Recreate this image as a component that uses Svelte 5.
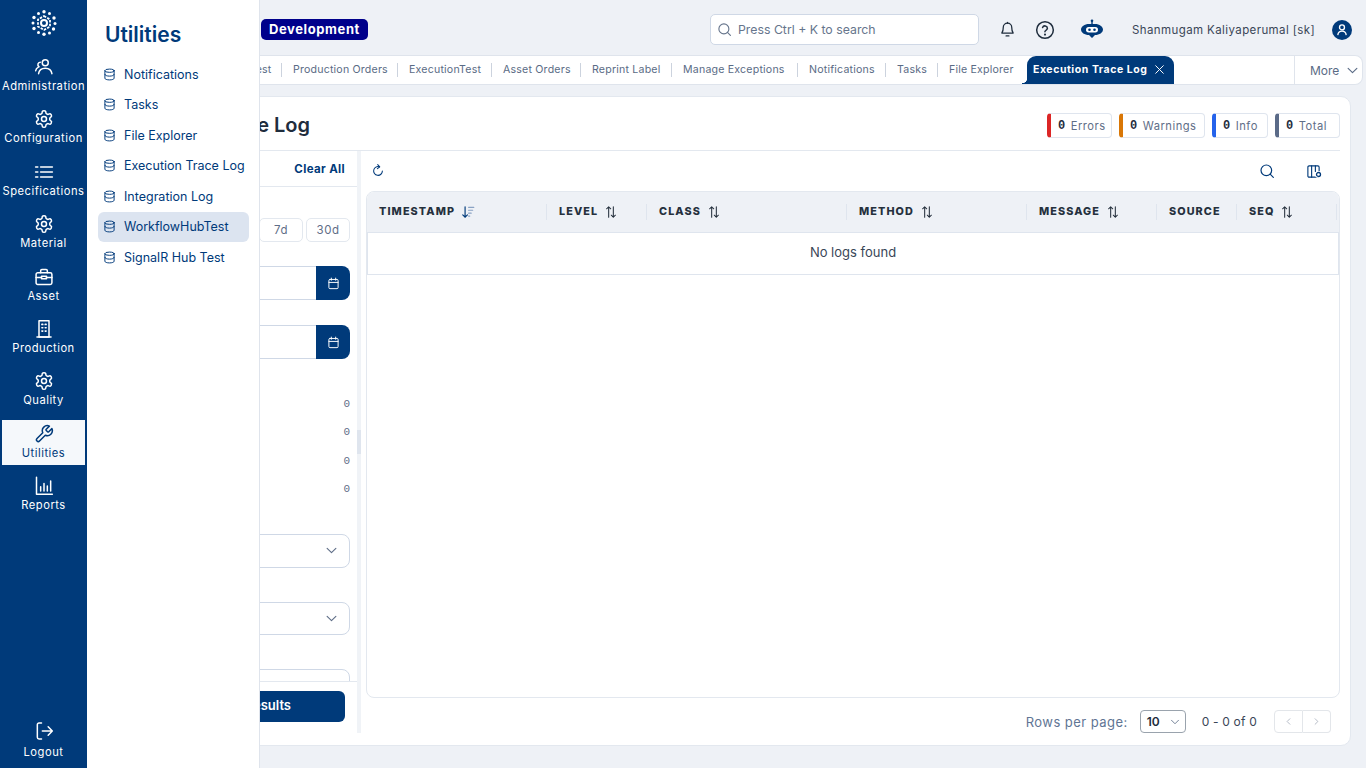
<script>
  const icons = {
    users: '<circle cx="13.5" cy="7" r="3.6"/><path d="M5.500 20c.6-4.500 3.600-6.600 8-6.600s7.400 2.100 8 6.600"/><path d="M7.500 6.200a3 3 0 0 0-1.500 5.500"/><path d="M2 16.500c.3-2 1.400-3.400 3-4.100"/>',
    gear: '<path d="M12.220 2h-.44a2 2 0 0 0-2 2v.18a2 2 0 0 1-1 1.730l-.43.25a2 2 0 0 1-2 0l-.15-.08a2 2 0 0 0-2.730.730l-.22.380a2 2 0 0 0 .730 2.730l.15.100a2 2 0 0 1 1 1.720v.510a2 2 0 0 1-1 1.740l-.15.090a2 2 0 0 0-.730 2.730l.22.380a2 2 0 0 0 2.730.730l.15-.08a2 2 0 0 1 2 0l.43.250a2 2 0 0 1 1 1.730V20a2 2 0 0 0 2 2h.44a2 2 0 0 0 2-2v-.18a2 2 0 0 1 1-1.730l.43-.25a2 2 0 0 1 2 0l.15.080a2 2 0 0 0 2.730-.730l.22-.39a2 2 0 0 0-.730-2.730l-.15-.08a2 2 0 0 1-1-1.740v-.5a2 2 0 0 1 1-1.740l.15-.09a2 2 0 0 0 .730-2.730l-.22-.38a2 2 0 0 0-2.730-.730l-.15.080a2 2 0 0 1-2 0l-.43-.25a2 2 0 0 1-1-1.730V4a2 2 0 0 0-2-2z"/><circle cx="12" cy="12" r="3"/>',
    list: '<path d="M8 6h14M8 12h14M8 18h14" stroke-width="2"/><path d="M2 6h2.500M2 12h2.500M2 18h2.500" stroke-width="2"/>',
    case: '<rect x="2.500" y="7" width="19" height="14" rx="2"/><path d="M8 7V4.500A1.500 1.500 0 0 1 9.500 3h5A1.500 1.500 0 0 1 16 4.500V7"/><path d="M2.500 12.500h6.500M15 12.500h6.500"/><rect x="9" y="11" width="6" height="3"/>',
    building: '<rect x="6" y="2" width="12" height="19.500"/><path d="M3.500 21.500h17"/><path d="M9.500 6.500h1M13.500 6.500h1M9.500 10.500h1M13.500 10.500h1M9.500 14.500h1M13.500 14.500h1" stroke-width="2"/>',
    wrench: '<path d="M14.700 6.300a1 1 0 0 0 0 1.400l1.600 1.600a1 1 0 0 0 1.400 0l3.770-3.770a6 6 0 0 1-7.940 7.940l-6.910 6.910a2.120 2.120 0 0 1-3-3l6.910-6.910a6 6 0 0 1 7.940-7.940l-3.760 3.760z"/>',
    chart: '<path d="M3 1.500v20.500h19"/><path d="M8 13v5M12 9v9M16 12v6M20 6v12"/>',
    logout: '<path d="M9 2.500H6a2 2 0 0 0-2 2v15a2 2 0 0 0 2 2h3"/><path d="M10 12h12M17 7l5 5-5 5"/>',
    db: '<ellipse cx="12" cy="5" rx="8.500" ry="3"/><path d="M3.500 5v14c0 1.700 3.800 3 8.500 3s8.500-1.300 8.500-3V5"/><path d="M3.500 12c0 1.700 3.800 3 8.500 3s8.500-1.300 8.500-3"/>',
    calendar: '<rect x="3.500" y="4.500" width="17" height="17" rx="2"/><path d="M3.500 10h17M8 2v4M16 2v4"/>',
    search: '<circle cx="11" cy="11" r="8"/><path d="M21.500 21.500l-4.800-4.800"/>',
    bell: '<path d="M6 9a6 6 0 0 1 12 0c0 6 2 7.500 2 8H4c0-.5 2-2 2-8z"/><path d="M10 21h4M12 3V2"/>',
    help: '<circle cx="12" cy="12" r="10"/><path d="M9.100 9a3 3 0 0 1 5.800 1c0 2-3 2.500-3 4.200"/><path d="M12 17.500h.01" stroke-width="2.500"/>',
    user: '<circle cx="12" cy="8.500" r="3.300"/><path d="M6.500 18c.6-3 2.700-4.500 5.500-4.500s4.900 1.500 5.500 4.500"/>',
    refresh: '<path d="M19.500 12a7.500 7.500 0 1 1-5-7.100"/><path d="M11.500 1l3.500 3.900L11 8"/>',
    columns: '<rect x="3" y="3" width="18" height="18" rx="2"/><path d="M9 3v18M15 3v9"/>',
    chevron: '<path d="M5 8.500l7 7 7-7"/>',
    close: '<path d="M5 5l14 14M19 5L5 19"/>',
    left: '<path d="M15 6l-6 6 6 6"/>',
    right: '<path d="M9 6l6 6-6 6"/>',
    sort: '<path d="M8 21V3M4.500 6.500L8 3l3.500 3.500"/><path d="M16 3v18M12.500 17.500L16 21l3.500-3.500"/>'
  };

  const rail = [
    { label: 'Administration', icon: 'users' },
    { label: 'Configuration', icon: 'gear' },
    { label: 'Specifications', icon: 'list' },
    { label: 'Material', icon: 'gear' },
    { label: 'Asset', icon: 'case' },
    { label: 'Production', icon: 'building' },
    { label: 'Quality', icon: 'gear' },
    { label: 'Utilities', icon: 'wrench', active: true },
    { label: 'Reports', icon: 'chart' }
  ];

  const utilities = [
    'Notifications', 'Tasks', 'File Explorer', 'Execution Trace Log',
    'Integration Log', 'WorkflowHubTest', 'SignalR Hub Test'
  ];

  const tabs = [
    { label: 'SignalR Hub Test', width: 110 },
    { label: 'Production Orders', width: 116 },
    { label: 'ExecutionTest', width: 94 },
    { label: 'Asset Orders', width: 89 },
    { label: 'Reprint Label', width: 91 },
    { label: 'Manage Exceptions', width: 126 },
    { label: 'Notifications', width: 88 },
    { label: 'Tasks', width: 52 },
    { label: 'File Explorer', width: 89 }
  ];

  const counters = [
    { label: 'Errors', color: '#dc2626', width: 65 },
    { label: 'Warnings', color: '#d97706', width: 86 },
    { label: 'Info', color: '#2563eb', width: 56 },
    { label: 'Total', color: '#5b6b88', width: 65 }
  ];

  const columns = [
    { label: 'TIMESTAMP', width: 180, sort: 'active' },
    { label: 'LEVEL', width: 100, sort: 'plain' },
    { label: 'CLASS', width: 200, sort: 'plain' },
    { label: 'METHOD', width: 180, sort: 'plain' },
    { label: 'MESSAGE', width: 130, sort: 'plain' },
    { label: 'SOURCE', width: 80 },
    { label: 'SEQ', width: 100, sort: 'plain' }
  ];

  const levelRows = [0, 0, 0, 0];
</script>

{#snippet icon(name, size, cls = '')}
  <svg class={cls} width={size} height={size} viewBox="0 0 24 24" fill="none" stroke="currentColor" stroke-width="1.8" stroke-linecap="round" stroke-linejoin="round">{@html icons[name]}</svg>
{/snippet}

<div class="shell">
  <nav class="rail">
    <div class="logo">
      <svg width="26" height="26" viewBox="0 0 26 26" fill="none" stroke="#fff">
        <circle cx="13" cy="13" r="3" stroke-width="2" />
        <path d="M13 6l6 3.500v7L13 20l-6-3.500v-7z" stroke-dasharray="2.500 1.200" stroke-width="1.800" />
        <g fill="#fff" stroke="none">
          <circle cx="13" cy="1.800" r="1.700" /><circle cx="18.500" cy="3.500" r="1.500" /><circle cx="23" cy="8" r="1.700" />
          <circle cx="24" cy="13.500" r="1.500" /><circle cx="22.500" cy="19" r="1.700" /><circle cx="18.500" cy="23" r="1.500" />
          <circle cx="13" cy="24.200" r="1.700" /><circle cx="7.500" cy="22.500" r="1.500" /><circle cx="3" cy="18.500" r="1.700" />
          <circle cx="2" cy="13" r="1.500" /><circle cx="3" cy="7.500" r="1.700" /><circle cx="7.500" cy="3.500" r="1.500" />
        </g>
      </svg>
    </div>
    <div class="rail-items">
      {#each rail as item}
        <div class="rail-item" class:active={item.active}>
          {@render icon(item.icon, 20)}
          <span>{item.label}</span>
        </div>
      {/each}
    </div>
    <div class="rail-item logout">
      {@render icon('logout', 20)}
      <span>Logout</span>
    </div>
  </nav>

  <aside class="flyout">
    <h2>Utilities</h2>
    <ul>
      {#each utilities as name}
        <li class:selected={name === 'WorkflowHubTest'}>
          {@render icon('db', 13)}
          <span>{name}</span>
        </li>
      {/each}
    </ul>
  </aside>

  <main class="main">
    <header class="topbar">
      <span class="env">Development</span>
      <div class="search">
        {@render icon('search', 15)}
        <span>Press Ctrl + K to search</span>
      </div>
      <div class="top-icons">
        <span class="bell">{@render icon('bell', 17)}</span>
        <span class="help">{@render icon('help', 20)}</span>
        <svg class="robot" width="22" height="22" viewBox="0 0 22 22">
          <path d="M11 1v4" stroke="#003a7a" stroke-width="1.400" />
          <circle cx="11" cy="1.800" r="1.300" fill="#003a7a" />
          <path d="M8 5h6c4.500 0 8 2.500 8 5.500S18.500 16 14 16l-3 3-3-3c-4.500 0-8-2.500-8-5.500S3.500 5 8 5z" fill="#003a7a" />
          <rect x="5" y="8" width="12" height="5.500" rx="2.700" fill="#fff" />
          <circle cx="8.500" cy="10.700" r="1.300" fill="#003a7a" /><circle cx="13.500" cy="10.700" r="1.300" fill="#003a7a" />
        </svg>
      </div>
      <span class="username">Shanmugam Kaliyaperumal [sk]</span>
      <span class="avatar">{@render icon('user', 18)}</span>
    </header>

    <div class="tabbar">
      {#each tabs as tab}
        <div class="tab" style="width: {tab.width}px"><span>{tab.label}</span></div>
      {/each}
      <div class="tab-active">
        <span>Execution Trace Log</span>
        {@render icon('close', 13)}
      </div>
      <div class="more">
        <span>More</span>
        {@render icon('chevron', 15)}
      </div>
    </div>

    <section class="card">
      <div class="card-head">
        <h1>Execution Trace Log</h1>
        <div class="counters">
          {#each counters as c}
            <div class="counter" style="border-left-color: {c.color}; width: {c.width}px">
              <b>0</b><span>{c.label}</span>
            </div>
          {/each}
        </div>
      </div>

      <div class="card-body">
        <div class="filters">
          <div class="filters-head"><button class="clear">Clear All</button></div>
          <div class="filters-scroll">
            <div class="quick">
              <button>7d</button>
              <button>30d</button>
            </div>
            <div class="date first">
              <div class="date-input"></div>
              <button class="date-btn">{@render icon('calendar', 13)}</button>
            </div>
            <div class="date second">
              <div class="date-input"></div>
              <button class="date-btn">{@render icon('calendar', 13)}</button>
            </div>
            <div class="levels">
              {#each levelRows as n}
                <div class="level">{n}</div>
              {/each}
            </div>
            <div class="select first-select">{@render icon('chevron', 15)}</div>
            <div class="select second-select">{@render icon('chevron', 15)}</div>
            <div class="select third-select"></div>
          </div>
          <div class="filters-foot">
            <button class="show">Show Results</button>
          </div>
        </div>

        <div class="splitter"><i></i></div>

        <div class="results">
          <div class="toolbar">
            <span class="tool refresh">{@render icon('refresh', 14)}</span>
            <span class="tool find">{@render icon('search', 16)}</span>
            <span class="tool cols">
              {@render icon('columns', 15)}
              <svg class="cog" width="7" height="7" viewBox="0 0 7 7"><circle cx="3.500" cy="3.500" r="3.500" fill="#fff" /><circle cx="3.500" cy="3.500" r="2" fill="none" stroke="#003a7a" stroke-width="1.300" /></svg>
            </span>
          </div>

          <div class="table">
            <div class="thead">
              {#each columns as col}
                <div class="th" style="width: {col.width}px">
                  <span>{col.label}</span>
                  {#if col.sort === 'plain'}
                    {@render icon('sort', 14, 'sort')}
                  {:else if col.sort === 'active'}
                    <svg class="sort" width="14" height="14" viewBox="0 0 24 24" fill="none" stroke-width="2" stroke-linecap="round">
                      <path d="M7 3v18M3 17l4 4 4-4" stroke="#003a7a" />
                      <path d="M13 4h9M13 9h7M13 14h4.500M13 19h2" stroke="#8aa3c4" />
                    </svg>
                  {/if}
                </div>
              {/each}
            </div>
            <div class="empty">No logs found</div>
          </div>

          <div class="pager">
            <span class="rows-label">Rows per page:</span>
            <div class="rows-select"><b>10</b>{@render icon('chevron', 12)}</div>
            <span class="range">0 - 0 of 0</span>
            <div class="pager-btns">
              <button>{@render icon('left', 11)}</button>
              <button>{@render icon('right', 11)}</button>
            </div>
          </div>
        </div>
      </div>
    </section>
  </main>
</div>

<style>
  :global(body) {
    background: #eef1f6;
  }

  .shell {
    position: relative;
    display: flex;
    width: 1366px;
    height: 768px;
    overflow: hidden;
    font-family: Inter, "Noto Sans", sans-serif;
    color: #1f2d3d;
  }

  button {
    font-family: inherit;
    background: none;
    border: none;
    padding: 0;
  }

  svg {
    display: block;
    flex: none;
  }

  /* left rail */
  .rail {
    width: 87px;
    flex: none;
    background: #003a7a;
    color: #fff;
    display: flex;
    flex-direction: column;
    align-items: center;
  }

  .logo {
    height: 53px;
    padding-top: 10px;
    box-sizing: border-box;
  }

  .rail-items {
    display: flex;
    flex-direction: column;
    gap: 7.4px;
  }

  .rail-item {
    width: 83px;
    height: 45px;
    box-sizing: border-box;
    padding-top: 4px;
    display: flex;
    flex-direction: column;
    align-items: center;
    gap: 1px;
  }

  .rail-item span {
    font-size: 11.2px;
    line-height: 17px;
    letter-spacing: 0.5px;
    white-space: nowrap;
  }

  .rail-item.active {
    background: #f5f8fb;
    color: #003a7a;
  }

  .logout {
    margin-top: auto;
    margin-bottom: 6px;
    gap: 3px;
  }

  /* utilities flyout */
  .flyout {
    position: absolute;
    left: 87px;
    top: 0;
    bottom: 0;
    z-index: 5;
    width: 173px;
    box-sizing: border-box;
    background: #fff;
    border-right: 1px solid #dfe4ec;
    padding: 21px 10px 0 11px;
    color: #003a7a;
  }

  .flyout h2 {
    margin: 0 0 11px 7px;
    font-size: 21px;
    line-height: 27px;
    font-weight: 600;
  }

  .flyout ul {
    list-style: none;
    margin: 0;
    padding: 0;
    display: flex;
    flex-direction: column;
    gap: 0.6px;
  }

  .flyout li {
    height: 30px;
    display: flex;
    align-items: center;
    gap: 8px;
    padding-left: 5px;
    border-radius: 6px;
    font-size: 12.5px;
    white-space: nowrap;
  }

  .flyout li.selected {
    background: #dce4f0;
  }

  /* main column */
  .main {
    flex: 1;
    min-width: 0;
    padding-left: 10px;
    display: flex;
    flex-direction: column;
  }

  .topbar {
    height: 55px;
    flex: none;
    display: flex;
    align-items: center;
    padding: 4px 0 0 164px;
    box-sizing: border-box;
  }

  .env {
    width: 107px;
    height: 21px;
    line-height: 21px;
    text-align: center;
    background: #00008b;
    color: #fff;
    border-radius: 5px;
    font-size: 13px;
    font-weight: 700;
    letter-spacing: 0.6px;
  }

  .search {
    margin-left: 342px;
    width: 269px;
    height: 31px;
    box-sizing: border-box;
    background: #fff;
    border: 1px solid #cfd8e6;
    border-radius: 5px;
    display: flex;
    align-items: center;
    gap: 6px;
    padding-left: 6px;
    font-size: 12.3px;
    color: #66758c;
  }

  .top-icons {
    display: flex;
    align-items: center;
    margin-left: 20px;
    color: #1f2d3d;
  }

  .help {
    margin-left: 19px;
  }

  .robot {
    margin-left: 26px;
  }

  .username {
    margin-left: 29px;
    width: 185px;
    font-size: 11.5px;
    letter-spacing: 0.4px;
    color: #3a4657;
    white-space: nowrap;
  }

  .avatar {
    margin-left: 15px;
    width: 20px;
    height: 20px;
    border-radius: 50%;
    background: #003a7a;
    color: #fff;
    display: flex;
    align-items: center;
    justify-content: center;
  }

  /* tab strip */
  .tabbar {
    height: 30px;
    flex: none;
    width: 1266px;
    box-sizing: border-box;
    display: flex;
    align-items: center;
    padding-left: 75px;
    background: #fff;
    border: 1px solid #dfe4ec;
    border-left: none;
    border-radius: 0 8px 8px 0;
  }

  .tab {
    height: 14px;
    box-sizing: border-box;
    padding-left: 11px;
    border-right: 1px solid #ccd3de;
    display: flex;
    align-items: center;
    font-size: 10.6px;
    letter-spacing: 0.2px;
    color: #5a6b85;
    white-space: nowrap;
    flex: none;
  }

  .tab span {
    margin-top: -1px;
  }

  .tab:nth-child(9) {
    border-right: none;
  }

  .tab-active {
    position: relative;
    width: 147px;
    height: 28px;
    box-sizing: border-box;
    flex: none;
    background: #003a7a;
    color: #fff;
    border-radius: 9px 9px 0 0;
    display: flex;
    align-items: center;
    justify-content: space-between;
    padding: 0 8px 1px 6px;
    font-size: 10.5px;
    font-weight: 700;
    letter-spacing: 0.55px;
    white-space: nowrap;
  }

  .tab-active::before {
    content: "";
    position: absolute;
    left: -5px;
    bottom: 0;
    width: 5px;
    height: 6px;
    background: radial-gradient(circle at 0 0, transparent 5px, #003a7a 5.500px);
  }

  .more {
    margin-left: auto;
    width: 68px;
    height: 28px;
    box-sizing: border-box;
    border-left: 1px solid #dfe4ec;
    display: flex;
    align-items: center;
    padding-left: 15px;
    gap: 6px;
    font-size: 12px;
    color: #5a6b85;
  }

  /* card */
  .card {
    margin-top: 11px;
    width: 1254px;
    height: 650px;
    box-sizing: border-box;
    background: #fff;
    border: 1px solid #e3e8ef;
    border-radius: 10px;
    display: flex;
    flex-direction: column;
    padding-right: 10px;
  }

  .card-head {
    height: 54px;
    flex: none;
    box-sizing: border-box;
    border-bottom: 1px solid #e3e8ef;
    display: flex;
    align-items: center;
    justify-content: space-between;
  }

  .card-head h1 {
    margin: 2px 0 0;
    width: 212px;
    text-align: right;
    font-size: 20px;
    font-weight: 600;
    white-space: nowrap;
    color: #1f2d3d;
  }

  .counters {
    display: flex;
    gap: 7px;
    margin-top: 4px;
  }

  .counter {
    height: 25px;
    box-sizing: border-box;
    display: flex;
    align-items: center;
    gap: 5px;
    padding-left: 7px;
    border: 1px solid #dfe5ee;
    border-left: 4px solid;
    border-radius: 4px;
    font-size: 11.2px;
    letter-spacing: 0.5px;
    color: #5f6e87;
  }

  .counter b {
    font-family: "Liberation Mono", monospace;
    font-size: 12px;
    color: #1f2d3d;
  }

  .card-body {
    flex: 1;
    min-height: 0;
    display: flex;
  }

  /* filter panel */
  .filters {
    width: 259px;
    flex: none;
    height: 582px;
    display: flex;
    flex-direction: column;
  }

  .filters-head {
    height: 36px;
    flex: none;
    box-sizing: border-box;
    border-bottom: 1px solid #e3e8ef;
    display: flex;
    align-items: center;
    justify-content: flex-end;
    padding-right: 12px;
  }

  .clear {
    font-size: 11.5px;
    font-weight: 700;
    letter-spacing: 0.35px;
    color: #003a7a;
  }

  .filters-scroll {
    flex: 1;
    min-height: 0;
    overflow: hidden;
    padding: 31px 7px 0 12px;
  }

  .quick {
    display: flex;
    justify-content: flex-end;
    gap: 3px;
  }

  .quick button {
    width: 44px;
    height: 24px;
    box-sizing: border-box;
    border: 1px solid #e3e8ef;
    border-radius: 5px;
    font-size: 11.5px;
    letter-spacing: 0.5px;
    color: #5f6e87;
  }

  .date {
    display: flex;
    height: 34px;
  }

  .date.first {
    margin-top: 24px;
  }

  .date.second {
    margin-top: 25px;
  }

  .date-input {
    flex: 1;
    border: 1px solid #cfd8e6;
    border-right: none;
    border-radius: 8px 0 0 8px;
  }

  .date-btn {
    width: 34px;
    background: #003a7a;
    color: #fff;
    border-radius: 0 8px 8px 0;
    display: flex;
    align-items: center;
    justify-content: center;
  }

  .levels {
    margin-top: 31px;
    display: flex;
    flex-direction: column;
  }

  .level {
    height: 28.4px;
    line-height: 28.4px;
    text-align: right;
    font-family: "Liberation Mono", monospace;
    font-size: 11px;
    color: #5f6e87;
  }

  .select {
    height: 34px;
    box-sizing: border-box;
    border: 1px solid #cfd8e6;
    border-radius: 8px;
    display: flex;
    align-items: center;
    justify-content: flex-end;
    padding-right: 10px;
    color: #5f6e87;
  }

  .first-select {
    margin-top: 30px;
  }

  .second-select {
    margin-top: 34px;
    height: 33px;
  }

  .third-select {
    margin-top: 34px;
  }

  .filters-foot {
    height: 52px;
    flex: none;
    box-sizing: border-box;
    border-top: 1px solid #e3e8ef;
    padding: 9px 12px 0;
  }

  .show {
    width: 100%;
    height: 31px;
    box-sizing: border-box;
    background: #003a7a;
    color: #fff;
    border-radius: 6px;
    font-size: 13px;
    font-weight: 600;
    text-align: right;
    padding: 0 54px 3px 0;
  }

  .splitter {
    position: relative;
    width: 4px;
    height: 582px;
    flex: none;
    background: #f0f3f7;
  }

  .splitter i {
    position: absolute;
    left: 0;
    top: 279px;
    width: 4px;
    height: 24px;
    background: #dfe5ee;
  }

  /* results */
  .results {
    flex: 1;
    min-width: 0;
    padding-left: 5px;
    display: flex;
    flex-direction: column;
  }

  .toolbar {
    height: 40px;
    flex: none;
    display: flex;
    align-items: center;
    color: #003a7a;
  }

  .refresh {
    margin-left: 5px;
  }

  .find {
    margin-left: auto;
    margin-right: 31px;
  }

  .cols {
    position: relative;
    margin-right: 19px;
  }

  .cog {
    position: absolute;
    right: -1px;
    bottom: 1px;
  }

  .table {
    flex: 1;
    min-height: 0;
    box-sizing: border-box;
    border: 1px solid #e3e8ef;
    border-radius: 8px;
    overflow: hidden;
  }

  .thead {
    height: 41px;
    box-sizing: border-box;
    display: flex;
    background: #eef1f6;
    border-bottom: 1px solid #dfe5ee;
  }

  .th {
    flex: none;
    box-sizing: border-box;
    display: flex;
    align-items: center;
    gap: 6px;
    padding: 0 0 2px 12px;
    position: relative;
    font-size: 10.8px;
    font-weight: 800;
    letter-spacing: 1.1px;
    color: #25303d;
  }

  .th::after {
    content: "";
    position: absolute;
    right: 0;
    top: 12px;
    height: 16px;
    width: 1.500px;
    background: #dfe5ee;
  }

  .th :global(.sort) {
    color: #25303d;
    margin-top: 2px;
  }

  .empty {
    height: 42px;
    box-sizing: border-box;
    border: 1px solid #dfe5ee;
    border-top: none;
    padding-bottom: 3px;
    display: flex;
    align-items: center;
    justify-content: center;
    font-size: 13px;
    color: #3a4657;
  }

  .pager {
    height: 47px;
    flex: none;
    display: flex;
    align-items: center;
    justify-content: flex-end;
    padding-right: 9px;
  }

  .rows-label {
    font-size: 13px;
    letter-spacing: 0.45px;
    color: #5f7594;
  }

  .rows-select {
    margin-left: 12px;
    width: 46px;
    height: 23px;
    box-sizing: border-box;
    border: 1px solid #9aa3ad;
    border-radius: 4px;
    display: flex;
    align-items: center;
    justify-content: space-between;
    padding: 0 4px 0 6px;
    color: #66758c;
  }

  .rows-select b {
    font-size: 12px;
    font-weight: 600;
    color: #1f2d3d;
  }

  .range {
    margin-left: 16px;
    margin-right: 17px;
    font-size: 12px;
    letter-spacing: 0.2px;
    color: #3a4657;
  }

  .pager-btns {
    display: flex;
  }

  .pager-btns button {
    width: 29px;
    height: 23px;
    box-sizing: border-box;
    border: 1px solid #e3e6ea;
    color: #a6aebb;
    display: flex;
    align-items: center;
    justify-content: center;
  }

  .pager-btns button:first-child {
    border-radius: 4px 0 0 4px;
    border-right-width: 1px;
  }

  .pager-btns button:last-child {
    width: 28px;
    border-left: none;
    border-radius: 0 4px 4px 0;
  }
</style>
